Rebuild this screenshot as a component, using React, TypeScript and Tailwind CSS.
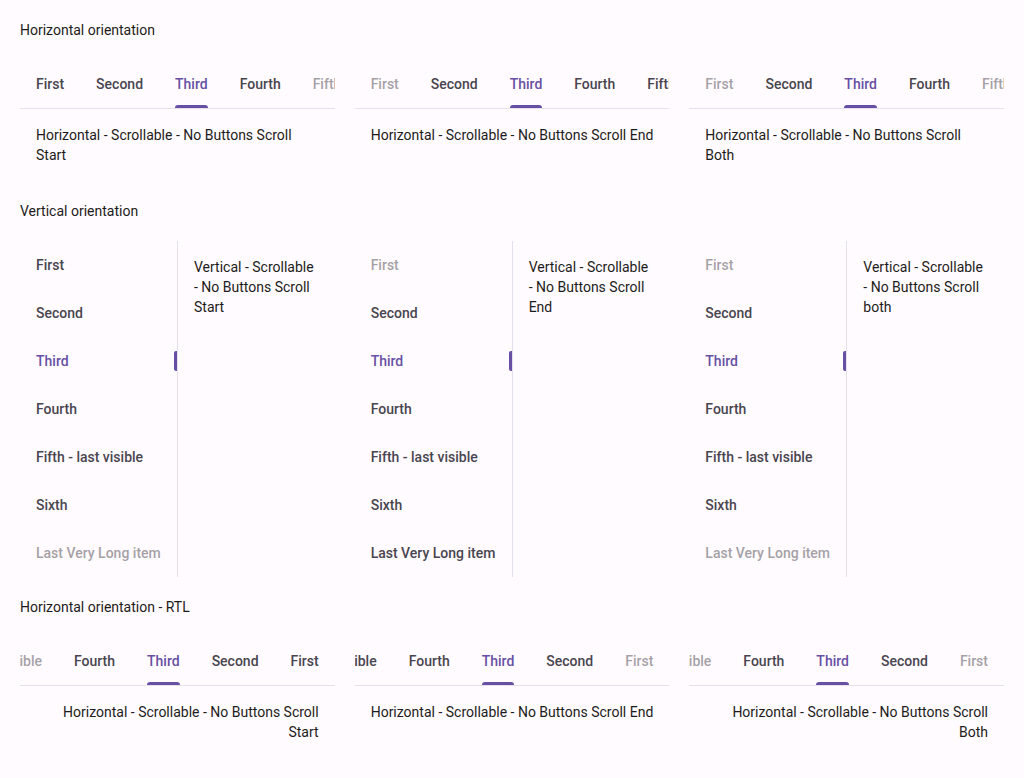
import React from "react";

const TABS = ["First", "Second", "Third", "Fourth", "Fifth - last visible", "Sixth", "Last Very Long item"];
const ACTIVE = 2;

type Fade = "start" | "end" | "both";

function HTab({ label, active }: { label: string; active: boolean }) {
  return (
    <div
      className={`relative flex h-12 shrink-0 items-center px-4 font-medium whitespace-nowrap ${
        active ? "text-[#6750a4]" : "text-[#49454f]"
      }`}
    >
      {label}
      {active && <div className="absolute bottom-0 left-4 right-4 h-[3px] rounded-t-[3px] bg-[#6750a4]" />}
    </div>
  );
}

function HPanel({ fade, text, rtl }: { fade: Fade; text: string; rtl?: boolean }) {
  const fadeEnd = fade === "start" || fade === "both";
  const fadeStart = fade === "end" || fade === "both";
  return (
    <div dir={rtl ? "rtl" : "ltr"} className="min-w-0">
      <div className="relative h-12 overflow-hidden">
        <div className="flex h-12">
          {TABS.map((t, i) => (
            <HTab key={t} label={t} active={i === ACTIVE} />
          ))}
        </div>
        {fadeStart && <div className="absolute top-0 bottom-0 start-0 w-12 bg-[#fffbfe]/50" />}
        {fadeEnd && <div className="absolute top-0 bottom-0 end-0 w-12 bg-[#fffbfe]/50" />}
      </div>
      <div className="h-px bg-[#e7e0ec]" />
      <div className="px-4 pt-4 pb-4 leading-5 text-[#1d1b20] min-h-[72px]">{text}</div>
    </div>
  );
}

function VPanel({ fade, text }: { fade: Fade; text: string }) {
  const fadeEnd = fade === "start" || fade === "both";
  const fadeStart = fade === "end" || fade === "both";
  return (
    <div className="flex h-[336px] min-w-0">
      <div className="relative w-[157px] shrink-0 overflow-hidden">
        {TABS.map((t, i) => (
          <div
            key={t}
            className={`relative flex h-12 items-center pl-4 font-medium whitespace-nowrap ${
              i === ACTIVE ? "text-[#6750a4]" : "text-[#49454f]"
            }`}
          >
            {t}
            {i === ACTIVE && (
              <div className="absolute right-0 top-[14px] h-5 w-[3px] rounded-l-[2px] bg-[#6750a4]" />
            )}
          </div>
        ))}
        {fadeStart && <div className="absolute top-0 left-0 right-0 h-12 bg-[#fffbfe]/50" />}
        {fadeEnd && <div className="absolute bottom-0 left-0 right-0 h-12 bg-[#fffbfe]/50" />}
      </div>
      <div className="w-px shrink-0 bg-[#e7e0ec]" />
      <div className="px-4 pt-4 leading-5 text-[#1d1b20]">{text}</div>
    </div>
  );
}

function Title({ children }: { children: React.ReactNode }) {
  return <div className="leading-5 text-[#1d1b20]">{children}</div>;
}

export default function App() {
  return (
    <div className="min-h-screen bg-[#fffbfe] p-5 font-['Roboto',sans-serif] text-sm flex flex-col gap-5">
      <Title>Horizontal orientation</Title>
      <div className="grid grid-cols-3 gap-5">
        <HPanel fade="start" text="Horizontal - Scrollable - No Buttons Scroll Start" />
        <HPanel fade="end" text="Horizontal - Scrollable - No Buttons Scroll End" />
        <HPanel fade="both" text="Horizontal - Scrollable - No Buttons Scroll Both" />
      </div>
      <Title>Vertical orientation</Title>
      <div className="grid grid-cols-3 gap-5">
        <VPanel fade="start" text="Vertical - Scrollable - No Buttons Scroll Start" />
        <VPanel fade="end" text="Vertical - Scrollable - No Buttons Scroll End" />
        <VPanel fade="both" text="Vertical - Scrollable - No Buttons Scroll both" />
      </div>
      <Title>Horizontal orientation - RTL</Title>
      <div className="grid grid-cols-3 gap-5">
        <HPanel rtl fade="start" text="Horizontal - Scrollable - No Buttons Scroll Start" />
        <HPanel rtl fade="end" text="Horizontal - Scrollable - No Buttons Scroll End" />
        <HPanel rtl fade="both" text="Horizontal - Scrollable - No Buttons Scroll Both" />
      </div>
    </div>
  );
}
